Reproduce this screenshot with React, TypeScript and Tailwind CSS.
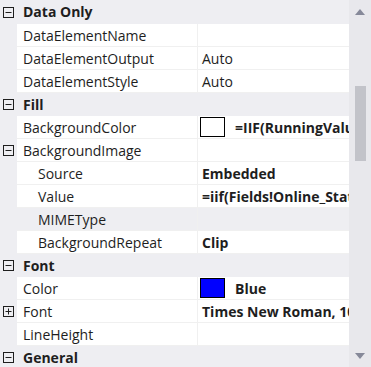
import React from "react";

type Row =
  | { kind: "cat"; label: string; icon: "minus" | "plus" }
  | {
      kind: "prop";
      label: string;
      indent?: boolean;
      value?: string;
      bold?: boolean;
      swatch?: string;
      icon?: "minus" | "plus";
      gray?: boolean;
    };

const rows: Row[] = [
  { kind: "cat", label: "Data Only", icon: "minus" },
  { kind: "prop", label: "DataElementName" },
  { kind: "prop", label: "DataElementOutput", value: "Auto" },
  { kind: "prop", label: "DataElementStyle", value: "Auto" },
  { kind: "cat", label: "Fill", icon: "minus" },
  { kind: "prop", label: "BackgroundColor", value: "=IIF(RunningValue(Fields!Online_Status.Value", bold: true, swatch: "#ffffff" },
  { kind: "prop", label: "BackgroundImage", icon: "minus" },
  { kind: "prop", label: "Source", indent: true, value: "Embedded", bold: true },
  { kind: "prop", label: "Value", indent: true, value: "=iif(Fields!Online_Status.Value", bold: true },
  { kind: "prop", label: "MIMEType", indent: true, gray: true },
  { kind: "prop", label: "BackgroundRepeat", indent: true, value: "Clip", bold: true },
  { kind: "cat", label: "Font", icon: "minus" },
  { kind: "prop", label: "Color", value: "Blue", bold: true, swatch: "#0000ff" },
  { kind: "prop", label: "Font", value: "Times New Roman, 10pt", bold: true, icon: "plus" },
  { kind: "prop", label: "LineHeight" },
  { kind: "cat", label: "General", icon: "minus" },
];

function BoxIcon({ type }: { type: "minus" | "plus" }) {
  return (
    <svg width="11" height="11" viewBox="0 0 11 11" className="block">
      <rect x="0.5" y="0.5" width="10" height="10" fill="none" stroke="#1e1e1e" strokeWidth="1" />
      <line x1="2.5" y1="5.5" x2="8.5" y2="5.5" stroke="#1e1e1e" strokeWidth="1" />
      {type === "plus" && <line x1="5.5" y1="2.5" x2="5.5" y2="8.5" stroke="#1e1e1e" strokeWidth="1" />}
    </svg>
  );
}

export default function App() {
  return (
    <div
      className="flex w-[371px] h-[367px] overflow-hidden bg-[#eeeef2] text-[#1e1e1e] text-[14px]"
      style={{ fontFamily: '"Open Sans", "Noto Sans", sans-serif' }}
    >
      <div className="flex-1 min-w-0 flex flex-col">
        {rows.map((r, i) => {
          const h = i === 0 ? "h-[24px]" : "h-[23px]";
          if (r.kind === "cat") {
            return (
              <div key={i} className={`flex items-center shrink-0 ${h}`}>
                <div className="w-[17px] shrink-0 flex items-center pl-[3px]">
                  <BoxIcon type={r.icon} />
                </div>
                <div className="pl-[6px] font-bold whitespace-nowrap leading-none">{r.label}</div>
              </div>
            );
          }
          const bg = r.gray ? "bg-[#eeeef2]" : "bg-white";
          return (
            <div key={i} className={`flex shrink-0 ${h}`}>
              <div className="w-[17px] shrink-0 flex items-center pl-[3px]">
                {r.icon && <BoxIcon type={r.icon} />}
              </div>
              <div
                className={`w-[181px] shrink-0 flex items-center border-b border-r border-[#f0f0f0] whitespace-nowrap overflow-hidden ${bg} ${
                  r.indent ? "pl-[21px]" : "pl-[6px]"
                }`}
              >
                {r.label}
              </div>
              <div
                className={`flex-1 min-w-0 flex items-center border-b border-[#f0f0f0] whitespace-nowrap overflow-hidden ${bg} ${
                  r.swatch ? "pl-[2px]" : "pl-[4px]"
                }`}
              >
                {r.swatch && (
                  <span
                    className="inline-block w-[25px] h-[20px] border border-black shrink-0 mr-[10px]"
                    style={{ backgroundColor: r.swatch }}
                  />
                )}
                <span className={r.bold ? "font-bold" : ""}>{r.value}</span>
              </div>
            </div>
          );
        })}
      </div>
      <div className="w-[22px] shrink-0 bg-[#e8e8ec] flex flex-col items-center">
        <div className="h-[24px] flex items-center justify-center w-full">
          <svg width="10" height="6" viewBox="0 0 10 6">
            <polygon points="5,0 10,6 0,6" fill="#868999" />
          </svg>
        </div>
        <div className="mt-[62px] w-[11px] h-[75px] bg-[#c2c3c9]" />
        <div className="flex-1" />
        <div className="h-[22px] flex items-center justify-center w-full">
          <svg width="10" height="6" viewBox="0 0 10 6">
            <polygon points="0,0 10,0 5,6" fill="#868999" />
          </svg>
        </div>
      </div>
    </div>
  );
}
